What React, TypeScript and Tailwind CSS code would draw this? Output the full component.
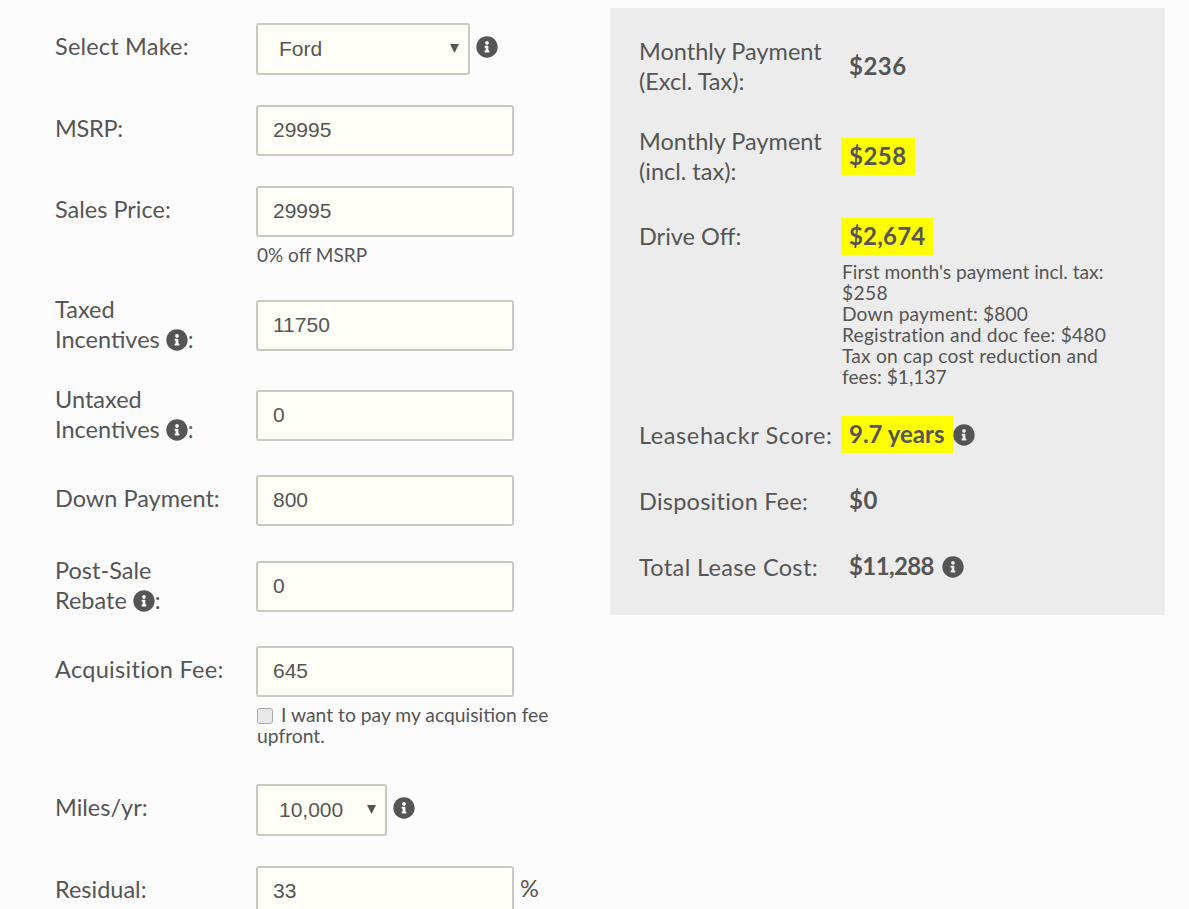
import React from 'react';
import { FaInfoCircle } from 'react-icons/fa';

const Info = ({ className = '' }: { className?: string }) => (
  <FaInfoCircle size={22} className={`inline-block text-[#555] ${className}`} />
);

const inputCls =
  'h-[51px] w-[258px] rounded-[3px] border-2 border-[#c9c9c3] bg-[#fffff8] pb-[2px] pl-[15px] text-[21px] text-[#555] outline-none font-["Liberation_Sans",sans-serif]';

const Caret = () => (
  <svg width="9" height="9" viewBox="0 0 9 9" className="pointer-events-none absolute right-[11px] top-[21px]">
    <path d="M0 0h9L4.5 9z" fill="#555" />
  </svg>
);

const Select = ({ value, className }: { value: string; className: string }) => (
  <div className="relative">
    <select
      defaultValue={value}
      className={`h-[52px] appearance-none rounded-[3px] border-2 border-[#c9c9c3] bg-[#fffff8] pl-[21px] text-[21px] text-[#555] outline-none font-["Liberation_Sans",sans-serif] ${className}`}
    >
      <option>{value}</option>
    </select>
    <Caret />
  </div>
);

const Label = ({ children, tall, className = '' }: { children: React.ReactNode; tall?: boolean; className?: string }) => (
  <div className={`w-[201px] shrink-0 ${tall ? '-mb-[9px] -mt-[6px]' : 'pt-[8px]'} ${className}`}>{children}</div>
);

const LeftColumn = () => (
  <div className="w-[610px] shrink-0 pl-[55px] pt-[23px]">
    <div className="mb-[30px] flex items-start">
      <Label className="tracking-[0.2px]">Select Make:</Label>
      <Select value="Ford" className="w-[214px]" />
      <Info className="ml-[6px] mt-[13px]" />
    </div>
    <div className="mb-[30px] flex items-start">
      <Label className="-tracking-[0.3px]">MSRP:</Label>
      <input readOnly value="29995" className={inputCls} />
    </div>
    <div className="mb-[35px] flex items-start">
      <Label>Sales Price:</Label>
      <div>
        <input readOnly value="29995" className={inputCls} />
        <div className="ml-[1px] mt-[7px] text-[19px] leading-[21px]">0% off MSRP</div>
      </div>
    </div>
    <div className="mb-[39px] flex items-start">
      <Label tall>
        Taxed
        <br />
        Incentives <Info className="-mt-[5px]" />:
      </Label>
      <input readOnly value="11750" className={inputCls} />
    </div>
    <div className="mb-[34px] flex items-start">
      <Label tall>
        Untaxed
        <br />
        Incentives <Info className="-mt-[5px]" />:
      </Label>
      <input readOnly value="0" className={inputCls} />
    </div>
    <div className="mb-[35px] flex items-start">
      <Label>Down Payment:</Label>
      <input readOnly value="800" className={inputCls} />
    </div>
    <div className="mb-[34px] flex items-start">
      <Label tall>
        Post-Sale
        <br />
        Rebate <Info className="-mt-[5px]" />:
      </Label>
      <input readOnly value="0" className={inputCls} />
    </div>
    <div className="mb-[38px] flex items-start">
      <Label className="tracking-[0.3px]">Acquisition Fee:</Label>
      <div>
        <input readOnly value="645" className={inputCls} />
        <div className="ml-[1px] mt-[7px] w-[300px] text-[19.3px] leading-[21px]">
          <input
            type="checkbox"
            className="mr-[8px] h-[16px] w-[16px] appearance-none rounded-[3px] border border-[#a9a9a9] bg-[#e9e9e9] align-[-2px]"
          />
          I want to pay my acquisition fee upfront.
        </div>
      </div>
    </div>
    <div className="mb-[30px] flex items-start">
      <Label>Miles/yr:</Label>
      <Select value="10,000" className="w-[131px]" />
      <Info className="ml-[6px] mt-[13px]" />
    </div>
    <div className="flex items-start">
      <Label>Residual:</Label>
      <input readOnly value="33" className={inputCls} />
      <span className="ml-[6px] pt-[7px]">%</span>
    </div>
  </div>
);

const Value = ({ children, hl, className = 'tracking-[0.5px]' }: { children: React.ReactNode; hl?: boolean; className?: string }) => (
  <span className={`inline-block px-[8px] pb-[4px] pt-[2px] text-[24px] font-bold leading-[31px] ${hl ? 'bg-[#ffff00]' : ''} ${className}`}>
    {children}
  </span>
);

const ResultRow = ({ label, children, className = '' }: { label: React.ReactNode; children: React.ReactNode; className?: string }) => (
  <div className={`flex items-center ${className}`}>
    <div className="w-[202px] shrink-0">{label}</div>
    <div>{children}</div>
  </div>
);

const ResultPanel = () => (
  <div className="mt-[8px] h-[607px] w-[555px] shrink-0 bg-[#ececec] pl-[29px] pr-[50px] pt-[28px]">
    <ResultRow label={<>Monthly Payment<br />(Excl. Tax):</>} className="mb-[30px]">
      <Value>$236</Value>
    </ResultRow>
    <ResultRow label={<>Monthly Payment<br />(incl. tax):</>} className="mb-[32px]">
      <Value hl>$258</Value>
    </ResultRow>
    <div className="flex items-start">
      <div className="w-[202px] shrink-0 pt-[3px]">Drive Off:</div>
      <div>
        <Value hl className="tracking-[0.2px]">$2,674</Value>
        <div className="ml-[1px] mt-[6px] w-[275px] text-[19.2px] leading-[21px]">
          First month's payment incl. tax: <span className="tracking-[0.4px]">$258</span>
          <br />
          <span className="tracking-[0.15px]">Down payment: $800</span>
          <br />
          <span className="tracking-[0.2px]">Registration and doc fee: $480</span>
          <br />
          <span className="tracking-[0.2px]">Tax on cap cost reduction and</span> fees: $1,137
        </div>
      </div>
    </div>
    <ResultRow label={<span className="tracking-[0.6px]">Leasehackr Score:</span>} className="mb-[29px] mt-[29px]">
      <Value hl className="tracking-[0px]">9.7 years</Value>
      <Info className="-mt-[5px]" />
    </ResultRow>
    <ResultRow label={<span className="tracking-[0.25px]">Disposition Fee:</span>} className="mb-[29px]">
      <Value>$0</Value>
    </ResultRow>
    <ResultRow label={<span className="tracking-[0.35px]">Total Lease Cost:</span>}>
      <Value className="-tracking-[0.6px]">$11,288</Value>
      <Info className="-mt-[5px]" />
    </ResultRow>
  </div>
);

export default function App() {
  return (
    <div className="flex h-[909px] w-[1189px] items-start overflow-hidden bg-[#fcfcfd] font-['Lato',sans-serif] text-[23.5px] leading-[30px] text-[#555]">
      <LeftColumn />
      <ResultPanel />
    </div>
  );
}
